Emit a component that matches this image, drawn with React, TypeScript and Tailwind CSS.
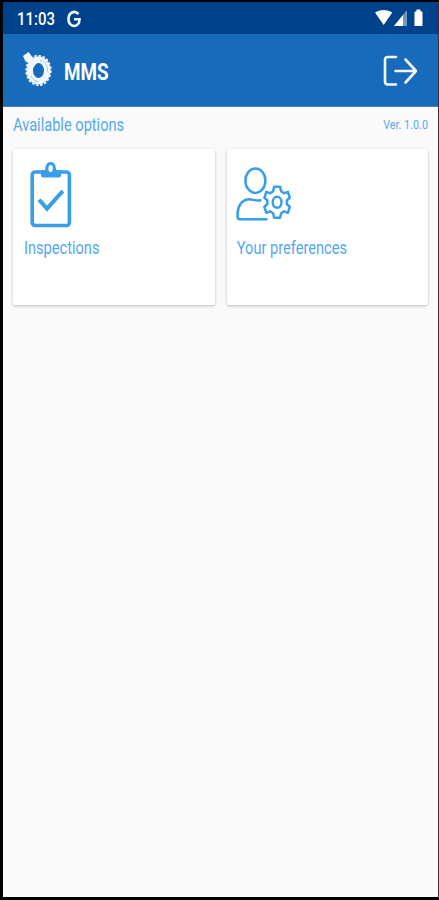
import type { ReactNode } from "react"

function LogoIcon() {
  return (
    <svg width="30" height="38" viewBox="0 0 30 38" fill="none">
      <ellipse cx="15.500" cy="19.500" rx="8.700" ry="10.700" stroke="#f1f7fd" strokeWidth="6.400" />
      <ellipse cx="15.500" cy="19.500" rx="12.200" ry="14.700" stroke="#f1f7fd" strokeWidth="1.800" strokeDasharray="2.600 1.600" />
      <path d="M17 9.500C22 10 25 14.500 24.500 20.500M8 25C9.500 28.500 12 30.500 15.500 30.500" stroke="#8fbbe2" strokeWidth="0.800" />
      <path d="M0 5 5.500 1 9 5.500 15 10.500 7.500 20 5 11.500 2.500 10.500Z" fill="#f1f7fd" />
    </svg>
  )
}

function LogoutIcon() {
  return (
    <svg width="35" height="32" viewBox="0 0 35 32" fill="none" stroke="#f1f7fd" strokeWidth="2.600" strokeLinecap="round" strokeLinejoin="round">
      <path d="M13 2H5Q2 2 2 5V26.500Q2 29.500 5 29.500H13" />
      <path d="M12.500 16H33M22.500 4.500 33 16 22.500 27.500" />
    </svg>
  )
}

function ClipboardIcon() {
  return (
    <svg width="42" height="68" viewBox="0 0 42 68" fill="none" stroke="#389eea">
      <rect x="2.200" y="11" width="37.200" height="53.500" rx="3" strokeWidth="3.600" />
      <path d="M11 9H15.200C15.200 4 17 1 20.600 1S26 4 26 9H31V14.500Q31 16.500 29 16.500H13Q11 16.500 11 14.500Z" fill="#389eea" stroke="none" />
      <ellipse cx="20.600" cy="7.500" rx="2.200" ry="3.500" fill="#fff" stroke="none" />
      <path d="M10.300 40.200 17 47.700 31.500 31.500" strokeWidth="4" strokeLinecap="square" />
    </svg>
  )
}

function PreferencesIcon() {
  return (
    <svg width="56" height="56" viewBox="0 0 56 56" fill="none" stroke="#389eea" strokeWidth="2.500" strokeLinecap="round" strokeLinejoin="round">
      <ellipse cx="19.400" cy="14.700" rx="10" ry="12.200" />
      <path d="M24.300 34.300C19.500 35.500 16.500 33 12.500 33.200C5 34 1.500 41 1.500 49V50.500Q1.500 53.200 4 53.200H30.500" />
      <g transform="translate(41.100 36.300)">
        <path d="M-3-15.500H3L4-11 7-9 10.800-10.500 12.700-4.500 9.800-2V2L12.700 4.500 10.800 10.500 7 9 4 11 3 15.500H-3L-4 11-7 9-10.800 10.500-12.700 4.500-9.800 2V-2L-12.700-4.500-10.800-10.500-7-9-4-11Z" />
        <ellipse rx="4.400" ry="5.500" />
      </g>
    </svg>
  )
}

function StatusIcons() {
  return (
    <svg width="49" height="18" viewBox="0 0 49 18" fill="#fff">
      <path d="M0 3.500C5 0 12.500 0 17.300 3.500L8.700 16Z" />
      <path d="M19 17 32 1V17Z" fill="#6f98c9" />
      <path d="M19 17 28 6V17Z" />
      <path d="M39.500 3 41.500 2V0.500H45.500V2L47.500 3V17H39.500Z" />
    </svg>
  )
}

function OptionCard({ icon, label }: { icon: ReactNode; label: ReactNode }) {
  return (
    <div className="h-[156px] rounded-[2px] bg-white pt-3 shadow-[0_1px_3px_rgba(0,0,0,0.26)]">
      <div className="h-[76px]">{icon}</div>
      {label}
    </div>
  )
}

export default function App() {
  return (
    <div className="flex h-[900px] w-[439px] flex-col overflow-hidden border-t-2 border-r border-b-[3px] border-l-[3px] border-black border-r-[#333] bg-[#fafafa] font-[Roboto,sans-serif]">
      {/* Status bar */}
      <div className="flex h-8 shrink-0 items-center bg-[#00418c] pt-0.5 pr-[14px] pl-[14px] text-white">
        <span className="w-[50px] origin-left scale-x-[0.83] text-[18px] leading-8 font-medium">11:03</span>
        <svg width="14" height="18" viewBox="0 0 14 18" fill="none" stroke="#f1f7fd" strokeWidth="2.600">
          <path d="M11.500 4C7.500-.2 1.500 2.500 1.500 9S7.500 17.800 11 14.200C12.400 12.800 12.500 11 12.500 9.300H7" />
        </svg>
        <div className="ml-auto pb-0.5">
          <StatusIcons />
        </div>
      </div>

      {/* App bar */}
      <div className="flex h-[73px] shrink-0 items-center border-b border-[#4381bd] bg-[#176bba] pr-5 pl-5 text-white">
        <LogoIcon />
        <h1 className="ml-[11px] origin-left scale-x-[0.82] pt-1.5 text-[23px] font-bold">MMS</h1>
        <div className="ml-auto pt-0.5">
          <LogoutIcon />
        </div>
      </div>

      {/* Options */}
      <main className="px-[10px] text-[#54a8ee]">
        <div className="flex h-[42px] items-start justify-between pt-[6px]">
          <h2 className="origin-left scale-x-[0.812] text-[18px] leading-6 whitespace-nowrap">Available options</h2>
          <span className="origin-right scale-x-[0.83] text-[13px] leading-6 whitespace-nowrap">Ver. 1.0.0</span>
        </div>
        <div className="grid grid-cols-2 gap-3">
          <OptionCard
            icon={<div className="pl-[17px]"><ClipboardIcon /></div>}
            label={<p className="origin-left scale-x-[0.812] pl-[13.500px] text-[18px] leading-[22px] whitespace-nowrap">Inspections</p>}
          />
          <OptionCard
            icon={<div className="pt-[5px] pl-[9px]"><PreferencesIcon /></div>}
            label={<p className="origin-left scale-x-[0.812] pl-[12px] text-[18px] leading-[22px] whitespace-nowrap">Your preferences</p>}
          />
        </div>
      </main>
    </div>
  )
}
